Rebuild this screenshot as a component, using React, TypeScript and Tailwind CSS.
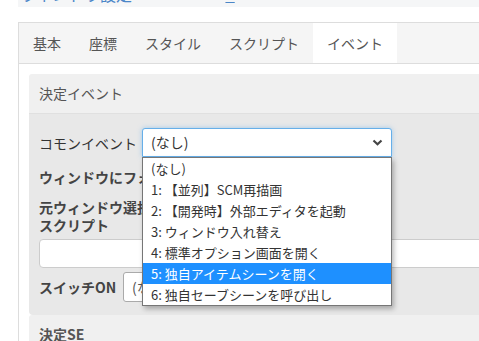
import React from 'react';

const font = "font-['Noto_Sans_CJK_JP','Noto_Sans',sans-serif]";

const tabs = ['基本', '座標', 'スタイル', 'スクリプト', 'イベント'];

const options = [
  '(なし)',
  '1: 【並列】SCM再描画',
  '2: 【開発時】外部エディタを起動',
  '3: ウィンドウ入れ替え',
  '4: 標準オプション画面を開く',
  '5: 独自アイテムシーンを開く',
  '6: 独自セーブシーンを呼び出し',
];

const Chevron = () => (
  <svg width="11" height="7" viewBox="0 0 11 7" className="shrink-0">
    <polyline points="1.5,1.5 5.5,5.2 9.5,1.5" fill="none" stroke="#444" strokeWidth="2.2" />
  </svg>
);

export default function App() {
  const active = 'イベント';
  const selected = 5;

  return (
    <div className={`w-[479px] h-[341px] overflow-hidden bg-white text-[#333] ${font}`}>
      {/* header strip cut off at top */}
      <div className="ml-[18px] h-[7px] overflow-hidden bg-[#f5f6f7]">
        <div className="-mt-[16px] ml-[2px] text-[16px] leading-[20px] text-[#4a86c8] whitespace-nowrap">
          ウィンドウ設定 <span className="ml-[90px] underline">_</span>
        </div>
      </div>

      <div className="mt-[15px] ml-[18px] w-[540px] border-l border-t border-[#dddddd] bg-white">
        {/* tabs */}
        <div className="flex h-[41px] border-b border-[#dddddd] bg-[#f5f5f5]">
          {tabs.map((t) => (
            <div
              key={t}
              className={`flex items-center px-[14px] text-[14px] leading-[20px] text-[#555] ${
                t === active ? 'bg-white' : ''
              }`}
            >
              {t}
            </div>
          ))}
        </div>

        <div className="p-[10px]">
          {/* panel: 決定イベント */}
          <div className="rounded-[3px] overflow-visible">
            <div className="flex h-[40px] items-center rounded-t-[3px] border-b border-[#e0e0e0] bg-[#f0f0f0] px-[10px] text-[14px] text-[#555]">
              決定イベント
            </div>
            <div className="rounded-b-[4px] bg-[#e8e8e8] px-[10px] pt-[14px] pb-[13px]">
              <div className="flex items-center">
                <div className="w-[103px] text-[14px] leading-[20px] text-[#333]">コモンイベント</div>
                <div className="relative">
                  <div className="flex h-[29px] w-[250px] items-center justify-between rounded-t-[3px] border border-[#66afe9] bg-white pl-[8px] pr-[8px] text-[14px] text-[#333] shadow-[0_0_5px_rgba(102,175,233,0.55)]">
                    <span>(なし)</span>
                    <Chevron />
                  </div>
                  <ul className="absolute left-0 top-full z-10 w-[250px] border border-[#767676] bg-white py-0 shadow-[2px_3px_5px_rgba(0,0,0,0.28)]">
                    {options.map((o, i) => (
                      <li
                        key={o}
                        className={`h-[21px] pl-[8px] text-[13px] leading-[21px] whitespace-nowrap ${
                          i === selected ? 'bg-[#1e90ff] text-white' : 'text-[#333]'
                        }`}
                      >
                        {o}
                      </li>
                    ))}
                  </ul>
                </div>
              </div>

              <div className="mt-[10px] text-[14px] font-bold leading-[20px] text-[#444] whitespace-nowrap">
                ウィンドウにフォーカスする
              </div>
              <div className="mt-[11px] text-[14px] font-bold leading-[18px] text-[#444] whitespace-nowrap">
                元ウィンドウ選択時に実行
              </div>
              <div className="text-[14px] font-bold leading-[18px] text-[#444]">スクリプト</div>
              <div className="mt-[5px] h-[29px] w-full rounded-[4px] border border-[#cccccc] bg-white" />

              <div className="mt-[4px] flex items-center">
                <div className="w-[84px] text-[14px] font-bold leading-[20px] text-[#444]">スイッチON</div>
                <div className="flex h-[30px] w-[220px] items-center rounded-[3px] border border-[#aaaaaa] bg-white pl-[8px] text-[14px] text-[#555]">
                  (なし)
                </div>
              </div>
            </div>
          </div>

          {/* panel: 決定SE */}
          <div className="rounded-t-[3px] bg-[#f0f0f0] px-[10px] pt-[9px] text-[14px] font-bold leading-[20px] text-[#555]">
            決定SE
          </div>
        </div>
      </div>
    </div>
  );
}
